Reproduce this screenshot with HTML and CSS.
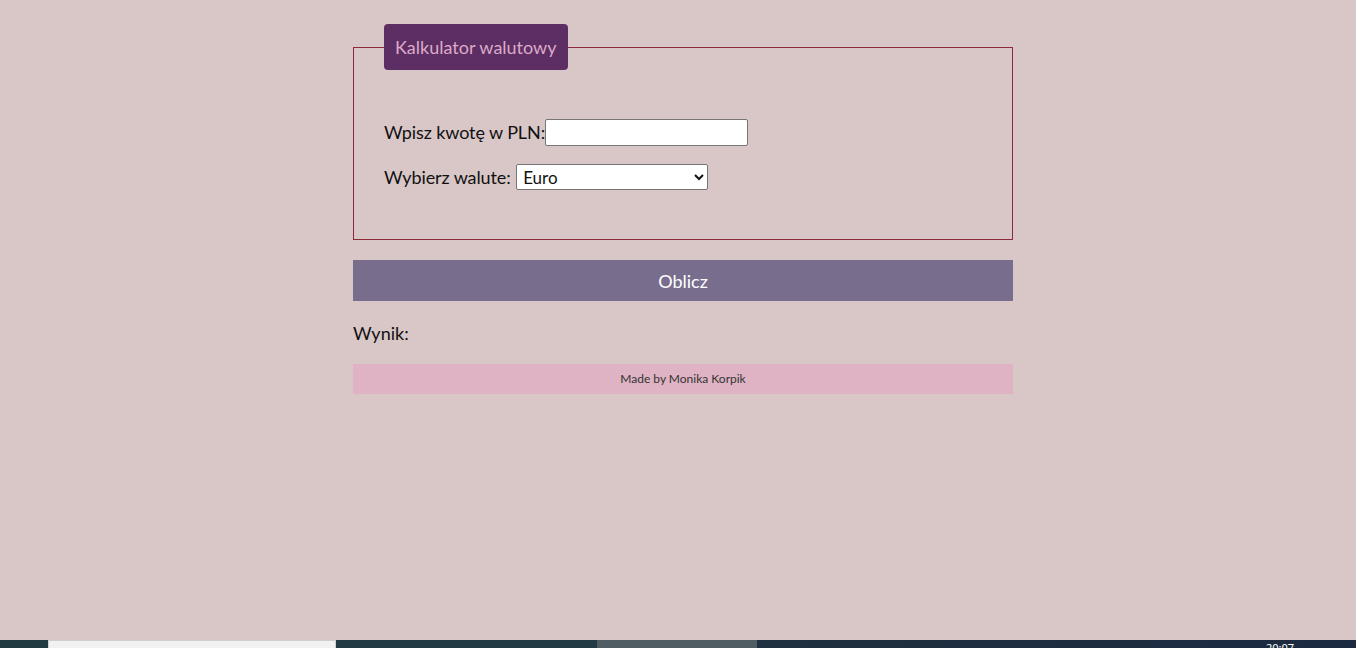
FILE: index.html
```html
<!DOCTYPE html>
<html lang="pl">
<head>
<meta charset="utf-8">
<title>Kalkulator walutowy</title>
<link rel="stylesheet" href="styles.css">
</head>
<body>
<main class="wrap">
  <fieldset class="calc">
    <legend class="calc-title">Kalkulator walutowy</legend>
    <div class="rows">
      <div class="row">
        <label class="lbl" for="amount">Wpisz kwotę w PLN:</label><input class="amount" id="amount" type="text">
      </div>
      <div class="row">
        <label class="lbl" for="cur">Wybierz walute:&nbsp;</label><select class="cur" id="cur"><option>Euro</option><option>Dolar</option><option>Funt</option></select>
      </div>
    </div>
  </fieldset>
  <button class="btn" type="button">Oblicz</button>
  <p class="result">Wynik:</p>
  <footer class="foot">Made by Monika Korpik</footer>
</main>
<div class="taskbar">
  <span class="tb tb-a"></span>
  <span class="tb tb-b"></span>
  <span class="tb tb-c"></span>
  <span class="tb tb-d"></span>
  <span class="tb tb-e"><span class="clock">20:07</span></span>
</div>
</body>
</html>
```
FILE: styles.css
```css
html, body {
  margin: 0;
  padding: 0;
  height: 100%;
}
body {
  background: #d9c6c6;
  font-family: Lato, "Open Sans", sans-serif;
  color: #111;
  overflow: hidden;
}
.wrap {
  width: 660px;
  margin-left: 353px;
  padding-top: 24px;
  display: flex;
  flex-direction: column;
}
.calc {
  margin: 0;
  padding: 0 30px;
  border: 1px solid #8c2a3a;
  min-width: 0;
}
.calc-title {
  padding: 12px 11px;
  background: #5c2e63;
  color: #dcaac9;
  font-size: 18px;
  line-height: 22px;
  border-radius: 4px;
}
.rows {
  display: flex;
  flex-direction: column;
  gap: 19px;
  padding: 49px 0 49px;
}
.row {
  display: flex;
  align-items: center;
  height: 26px;
}
.lbl {
  font-size: 18px;
  line-height: 22px;
  white-space: pre;
  letter-spacing: -0.1px;
}
.amount {
  box-sizing: border-box;
  width: 203px;
  height: 27px;
  margin: 0;
  border: 1px solid #767676;
  border-radius: 2px;
  background: #fff;
  font-family: inherit;
  font-size: 16px;
  padding: 2px 4px;
}
.cur {
  box-sizing: border-box;
  width: 192px;
  height: 26px;
  margin: 0 0 0 1px;
  border: 1px solid #767676;
  border-radius: 2px;
  background: #fff;
  color: #111;
  font-family: inherit;
  font-size: 17px;
  padding: 0 2px;
}
.btn {
  margin-top: 20px;
  height: 41px;
  border: 0;
  background: #786d8d;
  color: #fff;
  font-family: inherit;
  font-size: 18px;
  cursor: pointer;
}
.result {
  margin: 21px 0 0;
  font-size: 18px;
  line-height: 22px;
}
.foot {
  margin-top: 20px;
  height: 30px;
  line-height: 30px;
  background: #dfb3c3;
  text-align: center;
  font-size: 12px;
  color: #333;
}
.taskbar {
  position: fixed;
  left: 0;
  right: 0;
  bottom: 0;
  height: 8px;
  display: flex;
  background: #1e2c3e;
}
.tb { height: 8px; display: block; }
.tb-a { width: 48px; background: #203a42; }
.tb-b { width: 286px; background: #f1f1f1; border: 1px solid #cfcfcf; border-bottom: 0; }
.tb-c { width: 261px; background: #213a43; }
.tb-d { width: 160px; background: #505e64; }
.tb-e { flex: 1; background: linear-gradient(90deg, #1f3040, #1c2a40); position: relative; overflow: hidden; }
.clock {
  position: absolute;
  left: 509px;
  top: 2px;
  color: #fff;
  font-family: "Segoe UI", "Noto Sans", sans-serif;
  font-size: 11px;
  line-height: 11px;
}
```
